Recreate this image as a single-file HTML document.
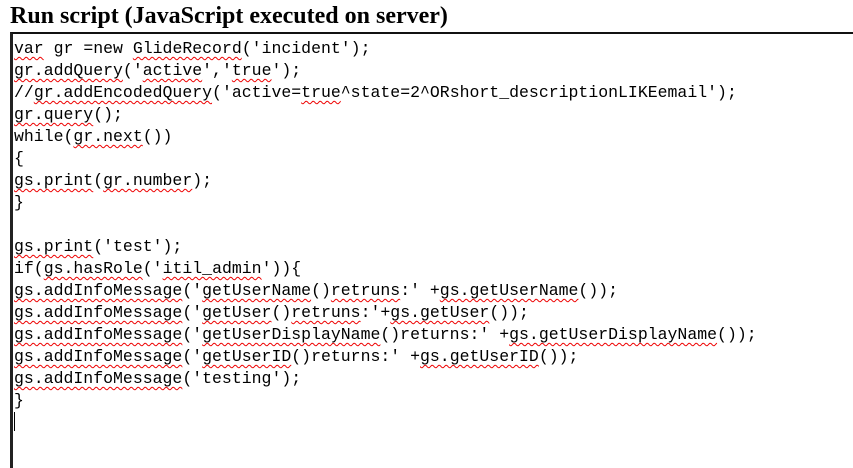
<!DOCTYPE html>
<html style="overflow:hidden;height:468px"><head><style>
body{margin:0;background:#fff;width:853px;height:468px;overflow:hidden;position:relative}
h1{position:absolute;left:10px;top:3px;margin:0;font:bold 24px "Liberation Serif",serif;color:#000;white-space:nowrap}
.box{position:absolute;left:10px;top:32px;width:843px;height:436px;border:2px solid #222;border-left-width:3px;border-top-color:#111;border-right:none;border-bottom:none;box-sizing:border-box}
pre{position:absolute;left:14px;top:38px;margin:0;font:16.5px/22px "Liberation Mono",monospace;color:#000}
u{text-decoration:underline wavy #e00;text-decoration-thickness:1px;text-underline-offset:3px}
.caret{position:absolute;left:14px;top:412px;width:1px;height:19px;background:#000}
</style></head><body>
<h1>Run script (JavaScript executed on server)</h1>
<div class="box"></div>
<pre><u>var</u> gr =new <u>GlideRecord</u>('incident');
<u>gr.addQuery</u>('<u>active</u>','<u>true</u>');
//<u>gr.addEncodedQuery</u>('active=<u>true</u>^state=2^ORshort_descriptionLIKEemail');
<u>gr.query</u>();
while(<u>gr.next</u>())
{
<u>gs.print</u>(<u>gr.number</u>);
}

<u>gs.print</u>('test');
if(<u>gs.hasRole</u>('<u>itil_admin</u>')){
<u>gs.addInfoMessage</u>('<u>getUserName</u>()<u>retruns</u>:' +<u>gs.getUserName</u>());
<u>gs.addInfoMessage</u>('<u>getUser</u>()<u>retruns</u>:'+<u>gs.getUser</u>());
<u>gs.addInfoMessage</u>('<u>getUserDisplayName</u>()returns:' +<u>gs.getUserDisplayName</u>());
<u>gs.addInfoMessage</u>('<u>getUserID</u>()returns:' +<u>gs.getUserID</u>());
<u>gs.addInfoMessage</u>('testing');
}</pre>
<div class="caret"></div>
</body></html>
